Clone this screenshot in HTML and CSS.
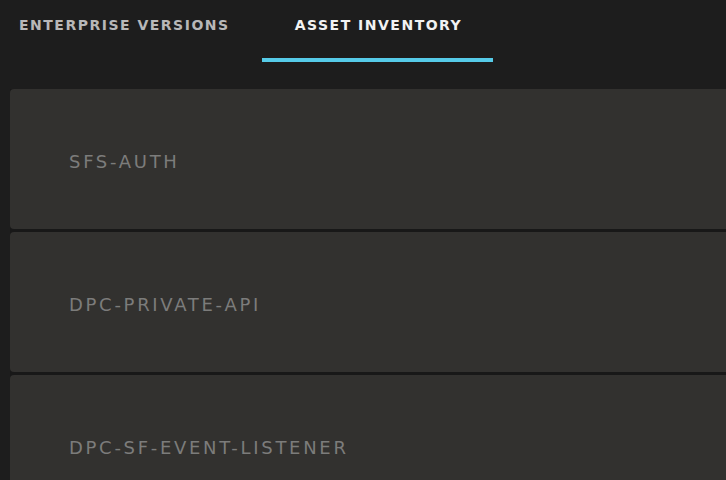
FILE: index.html
```html
<!DOCTYPE html>
<html>
<head>
<meta charset="utf-8">
<link rel="stylesheet" href="styles.css">
</head>
<body>
<div class="page">
  <nav class="tabs">
    <div class="tab tab-first">ENTERPRISE VERSIONS</div>
    <div class="tab tab-active">ASSET INVENTORY</div>
  </nav>
  <div class="list">
    <div class="card"><span class="name">SFS-AUTH</span></div>
    <div class="card"><span class="name">DPC-PRIVATE-API</span></div>
    <div class="card"><span class="name">DPC-SF-EVENT-LISTENER</span></div>
  </div>
</div>
</body>
</html>
```
FILE: styles.css
```css
html, body {
  margin: 0;
  padding: 0;
  background: #1d1d1d;
  overflow: hidden;
  height: 480px;
}
.page {
  width: 726px;
  height: 480px;
  overflow: hidden;
  font-family: "DejaVu Sans", "Liberation Sans", sans-serif;
}
.tabs {
  display: flex;
  height: 62px;
}
.tab {
  box-sizing: border-box;
  height: 62px;
  padding-top: 17px;
  font-size: 14px;
  line-height: 17px;
  font-weight: bold;
  letter-spacing: 1.5px;
  color: #b8b8b8;
  border-bottom: 4px solid transparent;
  text-align: center;
  white-space: nowrap;
}
.tab-first {
  width: 262px;
  padding-left: 19px;
  text-align: left;
}
.tab-active {
  width: 231px;
  padding-left: 2px;
  color: #f2f2f2;
  border-bottom-color: #56cbe8;
}
.list {
  margin: 27px 0 0 10px;
  display: flex;
  flex-direction: column;
  gap: 3px;
  background: #181818;
}
.card {
  box-sizing: border-box;
  height: 140px;
  background: #32312f;
  border-radius: 4px 0 0 4px;
  display: flex;
  align-items: center;
  padding-left: 59px;
  padding-top: 4px;
}
.name {
  font-size: 18px;
  color: #7c7c7b;
  letter-spacing: 2.7px;
}
```
